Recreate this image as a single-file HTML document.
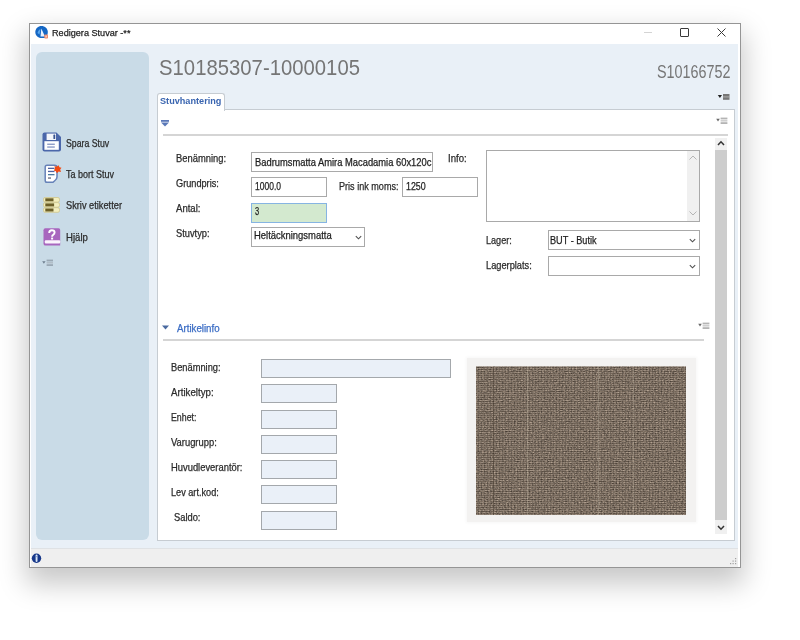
<!DOCTYPE html>
<html><head><meta charset="utf-8">
<style>
html,body{margin:0;padding:0;width:800px;height:640px;overflow:hidden;background:#fff;}
body{position:relative;font-family:"Liberation Sans",sans-serif;color:#222;}
.a{position:absolute;}
.t{position:absolute;white-space:nowrap;line-height:1;transform-origin:0 0;-webkit-text-stroke:0.25px currentColor;}
#shadow{left:29px;top:23px;width:712px;height:545px;box-shadow:0 13px 26px 3px rgba(0,0,0,0.22);background:#fff;}
#win{left:29px;top:23px;width:710px;height:543px;border:1px solid #959595;background:#fff;}
#content{left:31px;top:44px;width:707px;height:504px;background:#e9f0f7;}
#side{left:36px;top:52px;width:113px;height:488px;background:#c9dbe7;border-radius:6px;}
#status{left:31px;top:548px;width:707px;height:18px;background:#efefef;border-top:1px solid #dfe2e5;}
#panel{left:157px;top:109px;width:576px;height:430px;border:1px solid #c6ccd2;background:#fff;}
#tab{left:157px;top:93px;width:66px;height:17px;border:1px solid #c6ccd2;border-bottom:none;background:#fff;border-radius:3px 3px 0 0;}
.box{position:absolute;border:1px solid #a9a9a9;background:#fff;box-sizing:border-box;}
.abox{position:absolute;border:1px solid #a4a8ac;background:#eaf0f8;box-sizing:border-box;height:19px;width:76px;left:261px;}
.sep{position:absolute;height:2px;background:#d5d5d5;}
.chev{position:absolute;}
</style></head><body>
<div id="shadow" class="a"></div>
<div id="win" class="a"></div>
<!-- title bar -->
<svg class="a" style="left:35px;top:25px" width="14" height="14" viewBox="0 0 14 14">
  <path d="M6.5 1 C9.9 1 12.8 3.6 12.8 7 C12.8 9.3 12 11.5 10.5 13 L5.5 13 C2.6 12.5 0.3 10.2 0.3 7 C0.3 3.6 3.1 1 6.5 1Z" fill="#1567c4"/>
  <path d="M2.5 8 C3 5.5 4.5 4.5 5.5 4 L4.5 9.5Z" fill="#5aa8ee"/>
  <path d="M6.3 3.5 L10 11.5 L5.5 11.5Z" fill="#e8f2ff"/>
  <rect x="9.3" y="9.5" width="3.7" height="4" rx="0.8" fill="#ee8a6a"/>
  <rect x="10.4" y="10.6" width="1.5" height="1.8" fill="#fbd0c0"/>
</svg>
<div class="a" style="left:644px;top:32px;width:8px;height:1px;background:#d4d4d4"></div>
<div class="a" style="left:680px;top:28px;width:6.6px;height:6.6px;border:1px solid #3a3a3a;border-radius:1px"></div>
<svg class="a" style="left:717px;top:28px" width="9" height="9" viewBox="0 0 9 9"><path d="M0.5 0.5L8.5 8.5M8.5 0.5L0.5 8.5" stroke="#3a3a3a" stroke-width="1"/></svg>

<div id="content" class="a"></div>
<div id="side" class="a"></div>
<div id="status" class="a"></div>
<svg class="a" style="left:31px;top:553px" width="11" height="11" viewBox="0 0 11 11">
  <circle cx="5.5" cy="5.3" r="4.7" fill="#17388a"/>
  <rect x="4.6" y="1.6" width="1.9" height="7.4" rx="0.9" fill="#dbe8f8"/>
  <rect x="4.6" y="3.4" width="1.9" height="0.7" fill="#6a88c8"/>
</svg>
<svg class="a" style="left:729px;top:557px" width="9" height="9" viewBox="0 0 9 9"><g fill="#a0a0a0"><rect x="6" y="1" width="1.2" height="1.2"/><rect x="3.5" y="3.5" width="1.2" height="1.2"/><rect x="6" y="3.5" width="1.2" height="1.2"/><rect x="1" y="6" width="1.2" height="1.2"/><rect x="3.5" y="6" width="1.2" height="1.2"/><rect x="6" y="6" width="1.2" height="1.2"/></g></svg>

<!-- sidebar icons -->
<svg class="a" style="left:42px;top:132px" width="20" height="20" viewBox="0 0 20 20">
  <path d="M0.5 2.5 Q0.5 0.5 2.5 0.5 L14.5 0.5 L19 5 L19 17.5 Q19 19.5 17 19.5 L2.5 19.5 Q0.5 19.5 0.5 17.5Z" fill="#4b67aa"/>
  <rect x="4.6" y="1.6" width="9.4" height="6.4" fill="#f4f6fb"/>
  <rect x="11.4" y="2.6" width="1.8" height="4.4" rx="0.6" fill="#3a5590"/>
  <rect x="2.4" y="9.2" width="14.4" height="8.6" fill="#fff"/>
  <rect x="5.2" y="11.6" width="7.6" height="1.3" fill="#8596c4"/>
  <rect x="5.2" y="14.4" width="7.6" height="1.3" fill="#8596c4"/>
</svg>
<svg class="a" style="left:43px;top:164px" width="19" height="20" viewBox="0 0 19 20">
  <path d="M4 1.3 L11.5 1.3 Q14 1.3 14 3.8 L14 13 Q14 15 12 16.5 L10 18.3 L4 18.3 Q2.2 18.3 2.2 16.5 L2.2 3.1 Q2.2 1.3 4 1.3Z" fill="#fff" stroke="#6682b8" stroke-width="1.5"/>
  <rect x="5" y="3.7" width="6.5" height="1.3" fill="#4f62a0"/>
  <rect x="5" y="6.8" width="6.5" height="1.3" fill="#4f62a0"/>
  <rect x="5" y="10" width="6.5" height="1.3" fill="#4a7aa0"/>
  <rect x="5" y="13.4" width="3" height="1.3" fill="#667"/>
  <path d="M11.5 2 L13.5 2.8 L15.5 1.2 L16.5 3.2 L18.5 3.8 L17.2 5.6 L18 8 L15.6 7.6 L14 9.2 L12.8 7.2 L10.8 6.5 L12 4.6Z" fill="#f24a12"/>
</svg>
<svg class="a" style="left:43px;top:197px" width="17" height="16" viewBox="0 0 17 16">
  <rect x="0.5" y="0.5" width="16" height="4.6" rx="1.6" fill="#f3efbf" stroke="#cfc58a" stroke-width="0.8"/>
  <rect x="0.5" y="5.6" width="16" height="4.6" rx="1.6" fill="#f3efbf" stroke="#cfc58a" stroke-width="0.8"/>
  <rect x="0.5" y="10.7" width="16" height="4.6" rx="1.6" fill="#f3efbf" stroke="#cfc58a" stroke-width="0.8"/>
  <rect x="2.3" y="1.3" width="8.2" height="3" fill="#6d6028"/>
  <rect x="2.3" y="6.4" width="8.8" height="3" fill="#6d6028"/>
  <rect x="2.3" y="11.5" width="8.2" height="3" fill="#6d6028"/>
</svg>
<svg class="a" style="left:43px;top:228px" width="18" height="18" viewBox="0 0 18 18">
  <path d="M0.5 2.2 Q0.5 0.3 2.4 0.3 L15.6 0.3 Q17.2 0.3 17.2 2 L17.2 17.6 L2.6 17.6 Q0.5 17.6 0.5 15.4Z" fill="#a866be"/>
  <rect x="1.8" y="12.2" width="15.4" height="3.4" rx="1" fill="#fbf4fd"/>
  <path d="M6.2 4.9 Q6.2 2.3 8.9 2.3 Q11.6 2.3 11.6 4.6 Q11.6 6.1 10.1 6.9 Q9.1 7.4 9.1 8.8" fill="none" stroke="#fff" stroke-width="1.9"/>
  <rect x="8.1" y="9.6" width="2" height="1.9" fill="#fff"/>
</svg>
<!-- sidebar menu glyph -->
<svg class="a" style="left:42px;top:259px" width="12" height="8" viewBox="0 0 12 8"><path d="M0.2 2.2 L3.6 2.2 L1.9 4.8Z" fill="#6f7f8f"/><rect x="4.6" y="0.6" width="6.4" height="1.8" fill="#9aa8b4"/><rect x="4.6" y="3" width="6.4" height="1.6" fill="#b2bec8"/><rect x="4.6" y="5.2" width="6.4" height="1.8" fill="#9aa8b4"/></svg>

<!-- header menu glyph -->
<svg class="a" style="left:717px;top:93px" width="13" height="8" viewBox="0 0 13 8"><path d="M0.8 2 L5 2 L2.9 5Z" fill="#222"/><rect x="6" y="1" width="6.5" height="5.8" fill="#777"/><rect x="6" y="3.6" width="6.5" height="0.7" fill="#c8c8c8"/></svg>

<div id="panel" class="a"></div>
<div id="tab" class="a"></div>

<!-- section 1 -->
<svg class="a" style="left:161px;top:120px" width="8" height="7" viewBox="0 0 8 7"><rect x="0" y="0" width="8" height="1.8" fill="#5a78b8"/><path d="M0 2.6 L8 2.6 L4 6.5Z" fill="#5a78b8"/></svg>
<div class="sep" style="left:163px;top:134px;width:565px"></div>
<svg class="a" style="left:716px;top:117px" width="12" height="8" viewBox="0 0 12 8"><path d="M0.2 1.8 L3.8 1.8 L2 4.5Z" fill="#6a6a6a"/><rect x="4.6" y="0.6" width="6.8" height="1.8" fill="#b4b4b4"/><rect x="4.6" y="3" width="6.8" height="1.6" fill="#cfcfcf"/><rect x="4.6" y="5.2" width="6.8" height="1.8" fill="#b4b4b4"/></svg>

<!-- scrollbar -->
<div class="a" style="left:715px;top:138px;width:12px;height:396px;background:#f0f0f0"></div>
<div class="a" style="left:715px;top:150px;width:12px;height:370px;background:#cdcdcd"></div>
<svg class="a" style="left:717px;top:140px" width="8" height="6" viewBox="0 0 8 6"><path d="M1 5 L4 1.8 L7 5" fill="none" stroke="#333" stroke-width="1.5"/></svg>
<svg class="a" style="left:717px;top:525px" width="8" height="6" viewBox="0 0 8 6"><path d="M1 1 L4 4.2 L7 1" fill="none" stroke="#333" stroke-width="1.5"/></svg>

<!-- form -->
<div class="box" style="left:251px;top:152px;width:182px;height:20px"></div>
<div class="box" style="left:251px;top:177px;width:76px;height:20px"></div>
<div class="box" style="left:402px;top:177px;width:76px;height:20px"></div>
<div class="box" style="left:251px;top:203px;width:76px;height:20px;background:#d3e9cf;border-color:#86b4e2"></div>
<div class="box" style="left:251px;top:227px;width:114px;height:20px"></div>
<svg class="a" style="left:355px;top:235px" width="7" height="5" viewBox="0 0 7 5"><path d="M0.8 1.2 L3.5 3.8 L6.2 1.2" fill="none" stroke="#505050" stroke-width="1.1"/></svg>

<div class="box" style="left:486px;top:150px;width:214px;height:72px"></div>
<div class="a" style="left:687px;top:151px;width:12px;height:70px;background:#f0f0f0"></div>
<svg class="a" style="left:689px;top:155px" width="8" height="5" viewBox="0 0 8 5"><path d="M0.5 4.5 L4 1 L7.5 4.5" fill="none" stroke="#b5b5b5" stroke-width="1"/></svg>
<svg class="a" style="left:689px;top:211px" width="8" height="5" viewBox="0 0 8 5"><path d="M0.5 0.5 L4 4 L7.5 0.5" fill="none" stroke="#b5b5b5" stroke-width="1"/></svg>

<div class="box" style="left:548px;top:230px;width:152px;height:20px"></div>
<svg class="a" style="left:689px;top:238px" width="7" height="5" viewBox="0 0 7 5"><path d="M0.8 1.2 L3.5 3.8 L6.2 1.2" fill="none" stroke="#505050" stroke-width="1.1"/></svg>
<div class="box" style="left:548px;top:256px;width:152px;height:20px"></div>
<svg class="a" style="left:689px;top:264px" width="7" height="5" viewBox="0 0 7 5"><path d="M0.8 1.2 L3.5 3.8 L6.2 1.2" fill="none" stroke="#505050" stroke-width="1.1"/></svg>

<!-- section 2 -->
<svg class="a" style="left:162px;top:325px" width="7" height="5" viewBox="0 0 7 5"><path d="M0 0.5 L7 0.5 L3.5 4.5Z" fill="#4a6aa0"/></svg>
<div class="sep" style="left:163px;top:339px;width:541px"></div>
<svg class="a" style="left:698px;top:322px" width="12" height="8" viewBox="0 0 12 8"><path d="M0.2 1.8 L3.8 1.8 L2 4.5Z" fill="#6a6a6a"/><rect x="4.6" y="0.6" width="6.8" height="1.8" fill="#b4b4b4"/><rect x="4.6" y="3" width="6.8" height="1.6" fill="#cfcfcf"/><rect x="4.6" y="5.2" width="6.8" height="1.8" fill="#b4b4b4"/></svg>

<div class="abox" style="top:359px;width:190px"></div>
<div class="abox" style="top:384px"></div>
<div class="abox" style="top:410px"></div>
<div class="abox" style="top:435px"></div>
<div class="abox" style="top:460px"></div>
<div class="abox" style="top:485px"></div>
<div class="abox" style="top:511px"></div>

<!-- image -->
<div class="a" style="left:467px;top:358px;width:229px;height:164px;background:#f3f2f1;box-shadow:0 0 3px 1px #f7f7f7"></div>
<svg class="a" style="left:476px;top:366px" width="210" height="149" viewBox="0 0 210 149">
  <defs>
  <filter id="nz" x="0" y="0" width="100%" height="100%" color-interpolation-filters="sRGB">
    <feTurbulence type="fractalNoise" baseFrequency="0.6 0.9" numOctaves="2" seed="5"/>
    <feColorMatrix type="matrix" values="0.55 0 0 0 0.225  0.5 0 0 0 0.19  0.45 0 0 0 0.158  0 0 0 0 1"/>
  </filter>
  <pattern id="wv" width="3" height="2" patternUnits="userSpaceOnUse">
    <rect x="0" y="0" width="3" height="1" fill="#fff" opacity="0.10"/>
    <rect x="0" y="1" width="3" height="1" fill="#000" opacity="0.10"/>
    <rect x="2" y="0" width="1" height="2" fill="#000" opacity="0.12"/>
  </pattern>
  </defs>
  <rect width="210" height="149" filter="url(#nz)"/>
  <rect width="210" height="149" fill="url(#wv)"/>
  <rect x="17" y="0" width="1" height="149" fill="#3e3328" opacity="0.35"/>
  <rect x="51" y="0" width="1" height="149" fill="#d8ccb8" opacity="0.3"/>
  <rect x="122" y="0" width="1" height="149" fill="#d8ccb8" opacity="0.3"/>
  <rect x="157" y="0" width="1" height="149" fill="#d8ccb8" opacity="0.2"/>
  <rect x="0" y="0" width="210" height="1" fill="#fff" opacity="0.3"/>
</svg>

<div class="t" style="left:51.70px;top:27.87px;font-size:9.60px;font-weight:normal;color:#1e1e1e;transform:scaleX(0.949)">Redigera Stuvar -**</div>
<div class="t" style="left:159.31px;top:55.98px;font-size:22.82px;font-weight:normal;color:#757575;transform:scaleX(0.890);-webkit-text-stroke:0">S10185307-10000105</div>
<div class="t" style="left:656.90px;top:64.21px;font-size:17.59px;font-weight:normal;color:#757575;transform:scaleX(0.817);-webkit-text-stroke:0">S10166752</div>
<div class="t" style="left:159.80px;top:96.20px;font-size:9.80px;font-weight:bold;color:#3a65b0;transform:scaleX(0.932);-webkit-text-stroke:0">Stuvhantering</div>
<div class="t" style="left:65.75px;top:139.11px;font-size:10.20px;font-weight:normal;color:#2b2b2b;transform:scaleX(0.858)">Spara Stuv</div>
<div class="t" style="left:65.75px;top:170.11px;font-size:10.20px;font-weight:normal;color:#2b2b2b;transform:scaleX(0.882)">Ta bort Stuv</div>
<div class="t" style="left:65.75px;top:200.76px;font-size:10.20px;font-weight:normal;color:#2b2b2b;transform:scaleX(0.907)">Skriv etiketter</div>
<div class="t" style="left:65.75px;top:232.96px;font-size:10.20px;font-weight:normal;color:#2b2b2b;transform:scaleX(0.941)">Hjälp</div>
<div class="t" style="left:176.00px;top:153.86px;font-size:10.20px;font-weight:normal;color:#2b2b2b;transform:scaleX(0.920)">Benämning:</div>
<div class="t" style="left:176.00px;top:179.36px;font-size:10.20px;font-weight:normal;color:#2b2b2b;transform:scaleX(0.901)">Grundpris:</div>
<div class="t" style="left:176.00px;top:203.56px;font-size:10.20px;font-weight:normal;color:#2b2b2b;transform:scaleX(0.940)">Antal:</div>
<div class="t" style="left:176.00px;top:228.66px;font-size:10.20px;font-weight:normal;color:#2b2b2b;transform:scaleX(0.912)">Stuvtyp:</div>
<div class="t" style="left:254.50px;top:157.86px;font-size:10.20px;font-weight:normal;color:#1e1e1e;transform:scaleX(0.919)">Badrumsmatta Amira Macadamia 60x120c</div>
<div class="t" style="left:254.50px;top:182.36px;font-size:10.20px;font-weight:normal;color:#1e1e1e;transform:scaleX(0.834)">1000.0</div>
<div class="t" style="left:338.75px;top:181.66px;font-size:10.20px;font-weight:normal;color:#2b2b2b;transform:scaleX(0.891)">Pris ink moms:</div>
<div class="t" style="left:405.60px;top:182.36px;font-size:10.20px;font-weight:normal;color:#1e1e1e;transform:scaleX(0.870)">1250</div>
<div class="t" style="left:448.10px;top:153.61px;font-size:10.20px;font-weight:normal;color:#2b2b2b;transform:scaleX(0.942)">Info:</div>
<div class="t" style="left:254.60px;top:207.26px;font-size:10.20px;font-weight:normal;color:#1e1e1e;transform:scaleX(0.733)">3</div>
<div class="t" style="left:254.20px;top:230.76px;font-size:10.20px;font-weight:normal;color:#1e1e1e;transform:scaleX(0.927)">Heltäckningsmatta</div>
<div class="t" style="left:486.00px;top:236.36px;font-size:10.20px;font-weight:normal;color:#2b2b2b;transform:scaleX(0.891)">Lager:</div>
<div class="t" style="left:486.00px;top:260.56px;font-size:10.20px;font-weight:normal;color:#2b2b2b;transform:scaleX(0.908)">Lagerplats:</div>
<div class="t" style="left:550.40px;top:236.36px;font-size:10.20px;font-weight:normal;color:#1e1e1e;transform:scaleX(0.897)">BUT - Butik</div>
<div class="t" style="left:176.90px;top:323.61px;font-size:10.20px;font-weight:normal;color:#3a6cc4;transform:scaleX(0.951)">Artikelinfo</div>
<div class="t" style="left:171.25px;top:362.96px;font-size:10.20px;font-weight:normal;color:#2b2b2b;transform:scaleX(0.911)">Benämning:</div>
<div class="t" style="left:171.25px;top:387.96px;font-size:10.20px;font-weight:normal;color:#2b2b2b;transform:scaleX(0.953)">Artikeltyp:</div>
<div class="t" style="left:171.30px;top:413.06px;font-size:10.20px;font-weight:normal;color:#2b2b2b;transform:scaleX(0.863)">Enhet:</div>
<div class="t" style="left:171.30px;top:438.26px;font-size:10.20px;font-weight:normal;color:#2b2b2b;transform:scaleX(0.922)">Varugrupp:</div>
<div class="t" style="left:171.30px;top:463.36px;font-size:10.20px;font-weight:normal;color:#2b2b2b;transform:scaleX(0.921)">Huvudleverantör:</div>
<div class="t" style="left:171.30px;top:488.46px;font-size:10.20px;font-weight:normal;color:#2b2b2b;transform:scaleX(0.897)">Lev art.kod:</div>
<div class="t" style="left:173.50px;top:512.56px;font-size:10.20px;font-weight:normal;color:#2b2b2b;transform:scaleX(0.916)">Saldo:</div>
</body></html>
